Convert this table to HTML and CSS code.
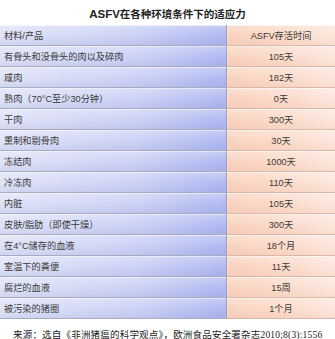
FILE: index.html
```html
<!DOCTYPE html>
<html lang="zh">
<head>
<meta charset="utf-8">
<link rel="stylesheet" href="styles.css">
</head>
<body>
<div class="page">
  <h1 class="title"><span class="lat">ASFV</span>在各种环境条件下的适应力</h1>
  <table class="tbl">
    <tr class="head"><td class="c1">材料/产品</td><td class="c2">ASFV存活时间</td></tr>
    <tr><td class="c1">有骨头和没骨头的肉以及碎肉</td><td class="c2">105天</td></tr>
    <tr><td class="c1">咸肉</td><td class="c2">182天</td></tr>
    <tr><td class="c1">熟肉（70°C至少30分钟）</td><td class="c2">0天</td></tr>
    <tr><td class="c1">干肉</td><td class="c2">300天</td></tr>
    <tr><td class="c1">熏制和剔骨肉</td><td class="c2">30天</td></tr>
    <tr><td class="c1">冻结肉</td><td class="c2">1000天</td></tr>
    <tr><td class="c1">冷冻肉</td><td class="c2">110天</td></tr>
    <tr><td class="c1">内脏</td><td class="c2">105天</td></tr>
    <tr><td class="c1">皮肤/脂肪（即使干燥）</td><td class="c2">300天</td></tr>
    <tr><td class="c1">在4°C储存的血液</td><td class="c2">18个月</td></tr>
    <tr><td class="c1">室温下的粪便</td><td class="c2">11天</td></tr>
    <tr><td class="c1">腐烂的血液</td><td class="c2">15周</td></tr>
    <tr><td class="c1">被污染的猪圈</td><td class="c2">1个月</td></tr>
  </table>
  <p class="source">来源：选自《非洲猪瘟的科学观点》，欧洲食品安全署杂志2010;8(3):1556</p>
</div>
</body>
</html>
```

FILE: styles.css
```css
html, body {
  margin: 0;
  padding: 0;
  background: #ffffff;
}
.page {
  width: 335px;
  height: 339px;
  overflow: hidden;
  font-family: "Liberation Sans", "Noto Sans CJK SC", sans-serif;
}
.title {
  margin: 0;
  height: 25px;
  line-height: 27px;
  text-align: center;
  font-size: 10.5px;
  font-weight: bold;
  color: #222;
  font-family: "Noto Sans CJK SC", serif;
}
.title .lat {
  font-family: "Liberation Sans", sans-serif;
  font-size: 11.5px;
}
.tbl {
  width: 335px;
  border-collapse: collapse;
  table-layout: fixed;
}
.tbl td {
  height: 20px;
  padding: 0;
  font-size: 9.2px;
  color: #3a3a3a;
  border-bottom: 1px solid #a7abc4;
  box-shadow: inset 0 1px 0 rgba(255,255,255,0.6);
}
.tbl .c1 {
  width: 222px;
  padding-left: 4px;
  background:
    linear-gradient(to bottom, rgba(255,255,255,0.28), rgba(255,255,255,0) 55%, rgba(90,100,170,0.10)),
    linear-gradient(to right, #dfe2f6, #cbd1f5 60%, #aeb8f0);
  border-right: 1px solid #9aa0c0;
}
.tbl .c2 {
  text-align: center;
  background:
    linear-gradient(to bottom, rgba(255,255,255,0.3), rgba(255,255,255,0) 55%, rgba(190,120,90,0.08)),
    linear-gradient(to right, #f9d2be, #fbdccc 60%, #fde6dc);
  border-bottom-color: #dcb7a6;
}
.source {
  margin: 8px 0 0 13px;
  font-family: "Liberation Serif", "Noto Sans CJK SC", serif;
  font-size: 9.5px;
  letter-spacing: 0.2px;
  color: #222;
  white-space: nowrap;
}
```
